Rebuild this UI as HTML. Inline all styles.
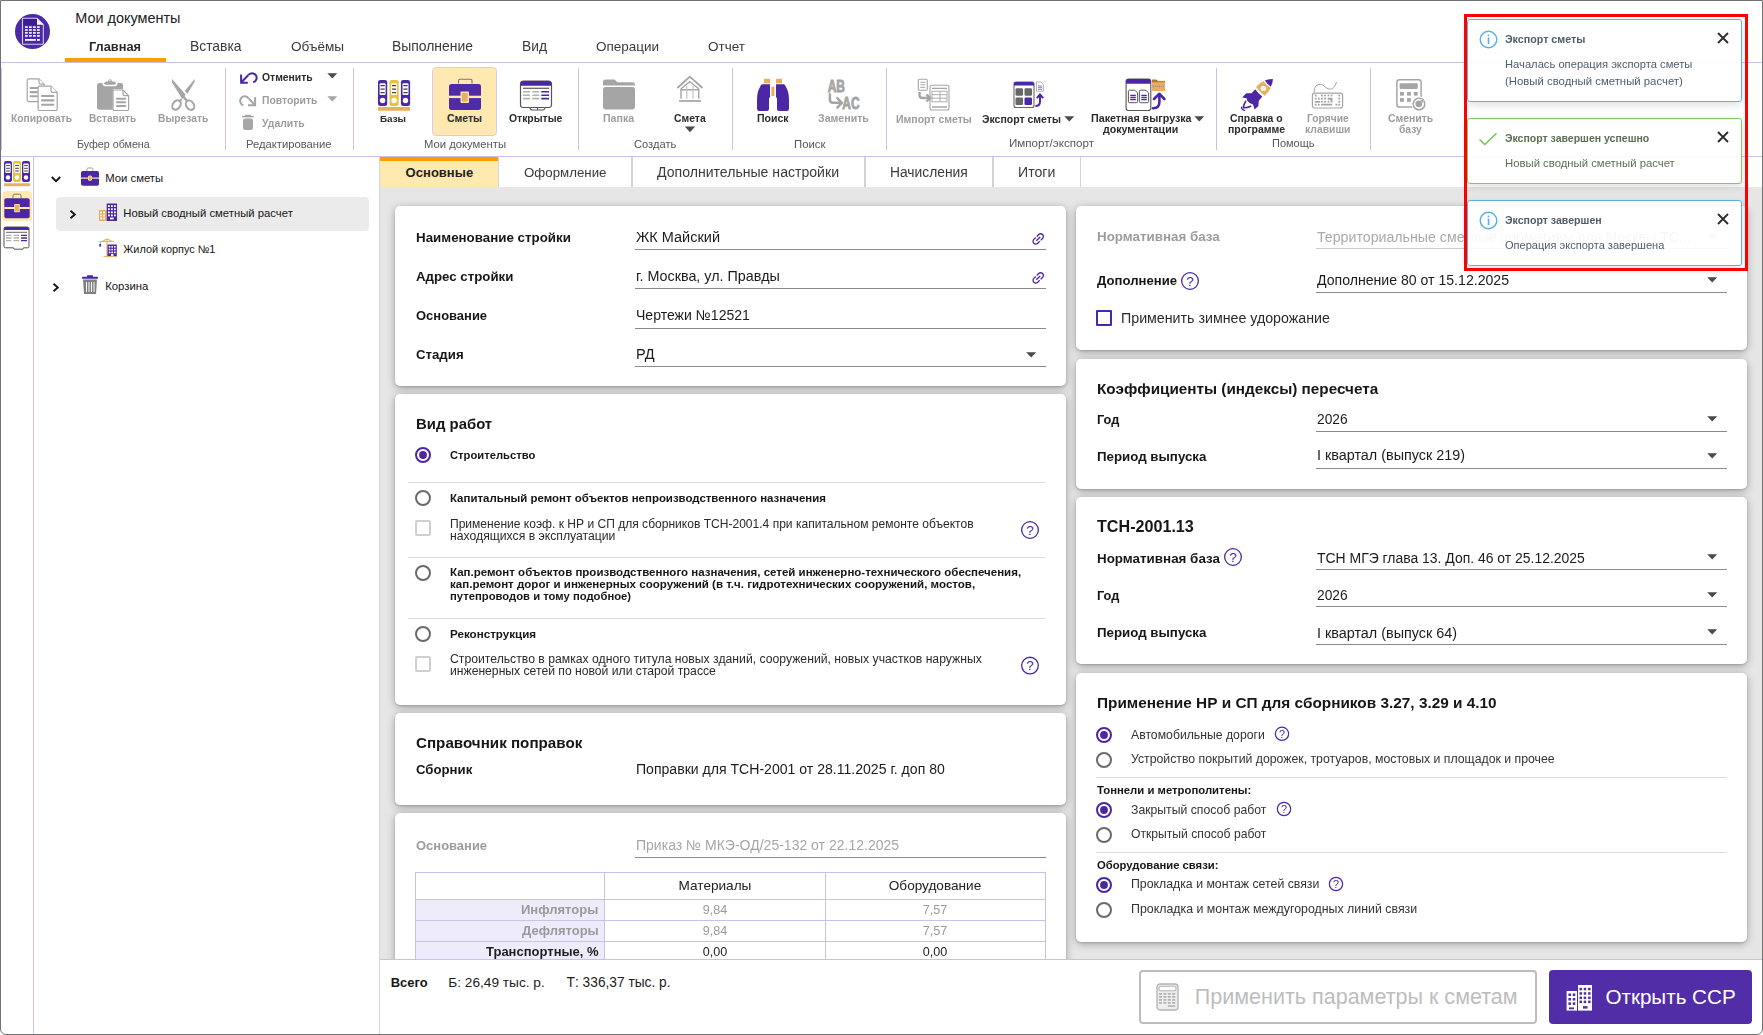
<!DOCTYPE html>
<html><head><meta charset="utf-8">
<style>
*{box-sizing:border-box;margin:0;padding:0}
html,body{width:1763px;height:1035px;overflow:hidden;background:#fff}
body{position:relative;font-family:"Liberation Sans",sans-serif;color:#1f1f1f}
.t{position:absolute;white-space:nowrap}
.r{position:absolute;display:block}
.card{position:absolute;background:#fff;border-radius:5px;box-shadow:0 2px 9px rgba(0,0,0,.3),0 1px 2px rgba(0,0,0,.15)}
.frame{position:absolute;left:0;top:0;width:1763px;height:1035px;border:1px solid #737373;border-radius:0 0 6px 6px;pointer-events:none;z-index:60}
</style></head><body>
<svg class="r" style="left:15px;top:14px;" width="36" height="36" viewBox="0 0 36 36"><circle cx="17.5" cy="17.5" r="17.5" fill="#4a2aa6"/>
<path d="M7.5 5 Q7.5 4.3 8.2 4.3 H22 L28.3 10.6 V29.5 Q28.3 30.2 27.6 30.2 H8.2 Q7.5 30.2 7.5 29.5 Z" fill="#4727a4" stroke="#d6ccf6" stroke-width="1.1"/>
<rect x="8.3" y="5.1" width="13.6" height="5.6" fill="#3a1b93"/>
<path d="M22 4.5 V10.8 H28.3 Z" fill="#fff"/>
<g fill="#fff">
<rect x="10" y="12.3" width="2.8" height="1.6"/><rect x="14" y="12.3" width="2.8" height="1.6"/><rect x="18" y="12.3" width="2.8" height="1.6"/><rect x="22" y="12.3" width="2.8" height="1.6"/>
<rect x="10" y="15.2" width="2.8" height="1.6"/><rect x="14" y="15.2" width="2.8" height="1.6"/><rect x="18" y="15.2" width="2.8" height="1.6"/><rect x="22" y="15.2" width="2.8" height="1.6"/>
<rect x="10" y="18.1" width="2.8" height="1.6"/><rect x="14" y="18.1" width="2.8" height="1.6"/><rect x="18" y="18.1" width="2.8" height="1.6"/><rect x="22" y="18.1" width="2.8" height="1.6"/>
<rect x="10" y="21.1" width="2.8" height="1.6"/><rect x="14" y="21.1" width="2.8" height="1.6"/><rect x="18" y="21.1" width="2.8" height="1.6"/><rect x="22" y="21.1" width="2.8" height="1.6"/>
<rect x="10" y="25" width="10.8" height="1.8"/><rect x="22" y="25" width="2.8" height="1.8"/>
</g></svg>
<div class="t" style="left:75.30px;top:11.00px;font-size:14.44px;line-height:14.44px;font-weight:400;color:#202020;">Мои документы</div>
<div class="t" style="left:89.30px;top:41.00px;font-size:12.79px;line-height:12.79px;font-weight:700;color:#2a2a2a;will-change:transform;">Главная</div>
<div class="t" style="left:190.20px;top:40.00px;font-size:13.86px;line-height:13.86px;font-weight:400;color:#3a3a3a;will-change:transform;">Вставка</div>
<div class="t" style="left:290.60px;top:40.00px;font-size:13.62px;line-height:13.62px;font-weight:400;color:#3a3a3a;will-change:transform;">Объёмы</div>
<div class="t" style="left:392.00px;top:40.00px;font-size:13.92px;line-height:13.92px;font-weight:400;color:#3a3a3a;will-change:transform;">Выполнение</div>
<div class="t" style="left:522.00px;top:40.00px;font-size:13.82px;line-height:13.82px;font-weight:400;color:#3a3a3a;will-change:transform;">Вид</div>
<div class="t" style="left:596.00px;top:40.00px;font-size:13.47px;line-height:13.47px;font-weight:400;color:#3a3a3a;will-change:transform;">Операции</div>
<div class="t" style="left:708.00px;top:40.00px;font-size:13.51px;line-height:13.51px;font-weight:400;color:#3a3a3a;will-change:transform;">Отчет</div>
<div class="r" style="left:65px;top:58px;width:101px;height:4px;background:#ff9d00;"></div>
<div class="r" style="left:0px;top:62px;width:1763px;height:1px;background:#cdbfea;"></div>
<div class="r" style="left:1px;top:68px;width:1px;height:82px;background:#cdbfea;"></div>
<div class="r" style="left:225px;top:68px;width:1px;height:82px;background:#cdbfea;"></div>
<div class="r" style="left:353px;top:68px;width:1px;height:82px;background:#cdbfea;"></div>
<div class="r" style="left:578px;top:68px;width:1px;height:82px;background:#cdbfea;"></div>
<div class="r" style="left:732px;top:68px;width:1px;height:82px;background:#cdbfea;"></div>
<div class="r" style="left:886px;top:68px;width:1px;height:82px;background:#cdbfea;"></div>
<div class="r" style="left:1216px;top:68px;width:1px;height:82px;background:#cdbfea;"></div>
<div class="r" style="left:1370px;top:68px;width:1px;height:82px;background:#cdbfea;"></div>
<svg class="r" style="left:26px;top:78px;" width="34" height="34" viewBox="0 0 34 34"><g fill="#fff" stroke="#a5a5a5" stroke-width="1.2" stroke-linejoin="round">
<path d="M2.8 0.9 H13 L18.1 6.2 V22.1 Q18.1 23.7 16.5 23.7 H2.8 Q1.2 23.7 1.2 22.1 V2.5 Q1.2 0.9 2.8 0.9Z"/><path d="M13 0.9 V4.6 Q13 6.2 14.6 6.2 H18.1"/>
<path d="M13.7 8.1 H25 L31.2 14.4 V30.9 Q31.2 32.5 29.6 32.5 H13.7 Q12.1 32.5 12.1 30.9 V9.7 Q12.1 8.1 13.7 8.1Z"/><path d="M25 8.1 V12.8 Q25 14.4 26.6 14.4 H31.2"/></g>
<g stroke="#a5a5a5" stroke-width="2.1" stroke-linecap="round"><path d="M4.6 10H11M4.6 14.1H11M4.6 18.2H11"/><path d="M16 18H27.4M16 22.4H27.4M16 26.7H27.4"/></g></svg>
<svg class="r" style="left:96px;top:78px;" width="34" height="34" viewBox="0 0 34 34"><rect x="1" y="5.1" width="26.1" height="26.6" rx="2.4" fill="#a5a5a5"/>
<path d="M7 5 Q7.5 7.5 10 7.5 H18 Q20.5 7.5 21 5" fill="none" stroke="#fff" stroke-width="1.6"/>
<path d="M8.3 5.8 Q8.3 3.4 10.5 3.4 H12 Q12.2 1.2 14 1.2 Q15.8 1.2 16 3.4 H17.6 Q19.8 3.4 19.8 5.8 Z" fill="#a5a5a5"/><circle cx="14" cy="2.8" r=".7" fill="#fff"/>
<path d="M18.7 11 H27.5 L33.3 16.8 V31 Q33.3 33 31.3 33 H18.7 Q16.7 33 16.7 31 V13 Q16.7 11 18.7 11Z" fill="#fff"/>
<path d="M18.6 12 H27 L32.6 17.6 V30.9 Q32.6 32.5 31 32.5 H18.6 Q17 32.5 17 30.9 V13.6 Q17 12 18.6 12Z" fill="#fff" stroke="#a5a5a5" stroke-width="1.2" stroke-linejoin="round"/><path d="M27 12 V16 Q27 17.6 28.6 17.6 H32.6" fill="none" stroke="#a5a5a5" stroke-width="1.2"/>
<g stroke="#a5a5a5" stroke-width="2" stroke-linecap="round"><path d="M21 20.8H29.2M21 24.2H29.2M21 28H29.2"/></g></svg>
<svg class="r" style="left:165px;top:74px;" width="40" height="40" viewBox="0 0 40 40"><g fill="#a5a5a5"><path d="M7 5 L20.4 20.2 L19.6 23 L17.2 25 L7 8.6 Z"/><path d="M29.8 5 L29.8 7.6 L22.3 20 L19.9 16.8 Z"/></g>
<path d="M18.3 22.6 L22.3 27.3" stroke="#a5a5a5" stroke-width="2.4"/><path d="M16.6 25.3 L14.6 27.2" stroke="#a5a5a5" stroke-width="2.2"/>
<g fill="none" stroke="#a5a5a5" stroke-width="2"><ellipse cx="11.5" cy="31" rx="3.7" ry="5.1" transform="rotate(35 11.5 31)"/><ellipse cx="25" cy="31.2" rx="3.7" ry="5.1" transform="rotate(-35 25 31.2)"/></g></svg>
<div class="t" style="left:10.90px;top:114.00px;font-size:10.31px;line-height:10.31px;font-weight:700;color:#9d9d9d;will-change:transform;">Копировать</div>
<div class="t" style="left:88.80px;top:114.00px;font-size:10.15px;line-height:10.15px;font-weight:700;color:#9d9d9d;will-change:transform;">Вставить</div>
<div class="t" style="left:158.20px;top:114.00px;font-size:10.31px;line-height:10.31px;font-weight:700;color:#9d9d9d;will-change:transform;">Вырезать</div>
<div class="t" style="left:76.50px;top:139.00px;font-size:10.71px;line-height:10.71px;font-weight:400;color:#575757;will-change:transform;">Буфер обмена</div>
<svg class="r" style="left:239px;top:71px;" width="19" height="14" viewBox="0 0 19 14"><g fill="none" stroke="#4b27a6" stroke-width="2"><path d="M2.1 3.4 V11.7 H8.8"/><path d="M2.6 11 L9.2 4.3"/><path d="M9.2 4.3 A4.6 4.6 0 1 1 14.2 11.3"/></g></svg>
<svg class="r" style="left:239px;top:94px;" width="19" height="14" viewBox="0 0 19 14"><g fill="none" stroke="#a5a5a5" stroke-width="2"><path d="M16.1 3.3 V11.3 H9"/><path d="M15.6 10.8 L9.6 4.4"/><path d="M9.6 4.4 A4.6 4.6 0 1 0 4.3 11.3"/></g></svg>
<svg class="r" style="left:240px;top:114px;" width="16" height="17" viewBox="0 0 16 17"><rect x="3" y="4.4" width="10" height="11.6" rx="2" fill="#a5a5a5"/><rect x="2" y="1.8" width="11.8" height="1.6" fill="#a5a5a5"/><path d="M4.6 1.9 Q4.6 0.8 6 0.8 H9.8 Q11.2 0.8 11.2 1.9Z" fill="#a5a5a5"/></svg>
<div class="t" style="left:262.30px;top:73.00px;font-size:10.38px;line-height:10.38px;font-weight:700;color:#2b2b2b;will-change:transform;">Отменить</div>
<div class="t" style="left:262.30px;top:96.00px;font-size:10.36px;line-height:10.36px;font-weight:700;color:#9d9d9d;will-change:transform;">Повторить</div>
<div class="t" style="left:262.30px;top:119.00px;font-size:10.4px;line-height:10.4px;font-weight:700;color:#9d9d9d;will-change:transform;">Удалить</div>
<svg class="r" style="left:327px;top:73px;" width="11" height="6" viewBox="0 0 11 6"><path d="M0.3 0.3 H10.3 L5.3 5.6 Z" fill="#4a4a4a"/></svg>
<svg class="r" style="left:327px;top:96px;" width="11" height="6" viewBox="0 0 11 6"><path d="M0.3 0.3 H10.3 L5.3 5.6 Z" fill="#a5a5a5"/></svg>
<div class="t" style="left:246.40px;top:139.00px;font-size:11.24px;line-height:11.24px;font-weight:400;color:#575757;will-change:transform;">Редактирование</div>
<svg class="r" style="left:377px;top:80px;" width="34" height="31" viewBox="0 0 34 31"><rect x="1.0" y="0" width="9.2" height="26" rx="2.3" fill="#4b27a6"/><rect x="2.6" y="3.3" width="6" height="11.6" rx="1" fill="#fff"/><path d="M3.5 5.6H7.7M3.5 9.1H7.7M3.5 12.6H7.7" stroke="#444" stroke-width="1.2"/><circle cx="5.6" cy="20.5" r="2.7" fill="#fff"/><rect x="12.5" y="0" width="9.2" height="26" rx="2.3" fill="#e9c237"/><rect x="14.1" y="3.3" width="6" height="11.6" rx="1" fill="#fff"/><path d="M15.0 5.6H19.2M15.0 9.1H19.2M15.0 12.6H19.2" stroke="#444" stroke-width="1.2"/><circle cx="17.1" cy="20.5" r="2.7" fill="#fff"/><rect x="23.9" y="0" width="9.2" height="26" rx="2.3" fill="#4b27a6"/><rect x="25.5" y="3.3" width="6" height="11.6" rx="1" fill="#fff"/><path d="M26.4 5.6H30.6M26.4 9.1H30.6M26.4 12.6H30.6" stroke="#444" stroke-width="1.2"/><circle cx="28.5" cy="20.5" r="2.7" fill="#fff"/><rect x="1" y="27" width="32" height="3.8" rx="1" fill="#e8b05c"/></svg>
<div class="t" style="left:380.40px;top:114.00px;font-size:9.85px;line-height:9.85px;font-weight:700;color:#2b2b2b;will-change:transform;">Базы</div>
<div class="r" style="left:432px;top:67px;width:65px;height:69px;background:#ffe9b1;border:1px solid #d9c9f0;border-radius:4px;"></div>
<svg class="r" style="left:448px;top:78px;" width="35" height="33" viewBox="0 0 35 33"><path d="M10.5 5.6 V2.6 Q10.5 1.2 12 1.2 H22.5 Q24 1.2 24 2.6 V5.6" fill="none" stroke="#777" stroke-width="1.1"/>
<rect x="1" y="6" width="32" height="26" rx="2.5" fill="#4f2ba6"/><rect x="1" y="17.7" width="32" height="2.4" fill="#ffe9b1"/>
<rect x="12.5" y="13.5" width="8.5" height="11.5" rx="1" fill="#ffe9b1"/><rect x="13.8" y="14.8" width="5.9" height="8.9" fill="#e8b05c"/></svg>
<div class="t" style="left:447.00px;top:114.00px;font-size:10.45px;line-height:10.45px;font-weight:700;color:#2b2b2b;">Сметы</div>
<svg class="r" style="left:519px;top:80px;" width="35" height="32" viewBox="0 0 35 32"><path d="M1.5 4 Q1.5 1 4.5 1 H29.5 Q32.5 1 32.5 4 V25 Q32.5 27 30.5 27.5 H26 L25.5 29 Q25 30 23.5 30 H13.5 Q12 30 11.5 29 L11 27.5 H4 Q1.5 27.5 1.5 25 Z" fill="#fff" stroke="#555" stroke-width="1.2"/>
<path d="M1.5 4.5 Q1.5 1 4.5 1 H29.5 Q32.5 1 32.5 4.5 V5.8 H1.5 Z" fill="#4b27a6"/>
<path d="M4 8.3H30.2" stroke="#666" stroke-width="1.3"/>
<g stroke="#b3b3b3" stroke-width="1.6"><path d="M4 11.7H11M13.3 11.7H20.3M4 15.2H11M13.3 15.2H20.3M4 18.6H11M13.3 18.6H20.3"/></g>
<g stroke="#4b27a6" stroke-width="1.6"><path d="M22.3 11.7H30M22.3 15.2H30M22.3 18.6H30"/></g>
<path d="M11.5 27.5 H25.5 M18.5 27.5 V30" stroke="#555" stroke-width="1"/></svg>
<div class="t" style="left:508.80px;top:114.00px;font-size:10.4px;line-height:10.4px;font-weight:700;color:#2b2b2b;will-change:transform;">Открытые</div>
<div class="t" style="left:424.20px;top:139.00px;font-size:11.27px;line-height:11.27px;font-weight:400;color:#575757;will-change:transform;">Мои документы</div>
<svg class="r" style="left:602px;top:79px;" width="34" height="31" viewBox="0 0 34 31"><path d="M1 3 Q1 0.5 3.5 0.5 H12.5 L15.5 3.3 H30.5 Q33 3.3 33 5.8 V6.6 H1 Z" fill="#a5a5a5"/>
<rect x="1" y="8.1" width="32" height="22.3" rx="2.4" fill="#a5a5a5"/></svg>
<svg class="r" style="left:676px;top:75px;" width="28" height="28" viewBox="0 0 28 28"><g fill="none" stroke="#a5a5a5" stroke-linejoin="miter"><path d="M1.3 13 L13.8 1.6 L26.5 13" stroke-width="1.8"/><path d="M5 13.7 L13.8 6.6 L22.7 13.7" stroke-width="1.4"/>
<path d="M5 13.5 V23.8 M22.7 13.5 V23.8 M5 14.8 H22.7" stroke-width="1.4"/><path d="M10.8 11 V23.8 M17 11 V23.8" stroke="#c4c4c4" stroke-width="1.2"/></g>
<path d="M3 26 H25.1" stroke="#a5a5a5" stroke-width="1.7"/></svg>
<div class="t" style="left:602.90px;top:113.00px;font-size:10.59px;line-height:10.59px;font-weight:700;color:#9d9d9d;will-change:transform;">Папка</div>
<div class="t" style="left:673.50px;top:114.00px;font-size:10.39px;line-height:10.39px;font-weight:700;color:#2b2b2b;will-change:transform;">Смета</div>
<svg class="r" style="left:684px;top:126px;" width="12" height="7" viewBox="0 0 12 7"><path d="M0.8 0.6 H11.2 L6 6.2 Z" fill="#4a4a4a"/></svg>
<div class="t" style="left:633.70px;top:139.00px;font-size:11.13px;line-height:11.13px;font-weight:400;color:#575757;will-change:transform;">Создать</div>
<svg class="r" style="left:756px;top:78px;" width="35" height="34" viewBox="0 0 35 34"><rect x="8" y="0.8" width="6" height="4.6" fill="#e8b05c"/><rect x="20" y="0.8" width="6" height="4.6" fill="#e8b05c"/>
<rect x="15.4" y="8.6" width="3" height="9.4" fill="#e8b05c"/>
<path d="M6 6.2 H14 V19 L13 20.5 V31 Q13 33 11 33 H3 Q1 33 1 30 V22 Q1 14 4 9 Q5 6.2 6 6.2Z" fill="#4b27a6"/>
<path d="M28 6.2 H20 V19 L21 20.5 V31 Q21 33 23 33 H31 Q33 33 33 30 V22 Q33 14 30 9 Q29 6.2 28 6.2Z" fill="#4b27a6"/></svg>
<svg class="r" style="left:820px;top:74px;" width="46" height="40" viewBox="0 0 46 40"><g transform="scale(0.74,1)" fill="#a5a5a5" stroke="#a5a5a5" stroke-width="0.9" font-family="Liberation Sans" font-weight="700" font-size="16.2"><text x="10.4" y="18">AB</text><text x="30.2" y="35">AC</text></g>
<g fill="none" stroke="#a5a5a5" stroke-width="2.5" stroke-linecap="round" stroke-linejoin="round"><path d="M9.9 20.3 V25.5 Q9.9 28.8 13.2 28.8 H21.5"/><path d="M17.3 24.2 L21.8 28.8 L17.3 33.6"/></g></svg>
<div class="t" style="left:756.70px;top:113.00px;font-size:10.53px;line-height:10.53px;font-weight:700;color:#2b2b2b;will-change:transform;">Поиск</div>
<div class="t" style="left:818.10px;top:113.00px;font-size:10.6px;line-height:10.6px;font-weight:700;color:#9d9d9d;will-change:transform;">Заменить</div>
<div class="t" style="left:793.50px;top:139.00px;font-size:11.37px;line-height:11.37px;font-weight:400;color:#575757;will-change:transform;">Поиск</div>
<svg class="r" style="left:917px;top:78px;" width="34" height="34" viewBox="0 0 34 34"><rect x="1.3" y="1.3" width="9" height="11" rx="1.2" fill="#fff" stroke="#a5a5a5" stroke-width="1.1"/>
<path d="M3.3 4.3H8.3M3.3 6.8H8.3M3.3 9.4H8.3" stroke="#a5a5a5" stroke-width="1"/>
<rect x="13" y="7.2" width="19" height="24.8" rx="2" fill="#fff" stroke="#a5a5a5" stroke-width="1.1"/>
<path d="M15 10.3H30M15 29H30" stroke="#a5a5a5" stroke-width="1.3"/>
<rect x="15" y="13.2" width="15" height="10.6" fill="none" stroke="#a5a5a5" stroke-width="0.9"/><path d="M15 16.7H30M15 20.2H30M23 13.2V23.8" stroke="#a5a5a5" stroke-width="0.9"/>
<path d="M2.5 14 V17 Q2.5 20 5.5 20 H13" fill="none" stroke="#a5a5a5" stroke-width="2.4"/><path d="M9.5 16.6 L13.2 20 L9.5 23.5" fill="none" stroke="#a5a5a5" stroke-width="2.4"/></svg>
<svg class="r" style="left:1013px;top:81px;" width="34" height="28" viewBox="0 0 34 28"><rect x="1" y="1" width="20" height="25.5" rx="2" fill="#fff" stroke="#666" stroke-width="1.1"/>
<path d="M1 3 Q1 1 3 1 H19 Q21 1 21 3 V4.5 H1 Z" fill="#4b27a6"/>
<rect x="2.5" y="7.2" width="7.5" height="7.6" rx="1.3" fill="#666"/><rect x="11.5" y="7.2" width="7.5" height="7.6" rx="1.3" fill="#666"/>
<rect x="2.5" y="16.5" width="7.5" height="7.6" rx="1.3" fill="#666"/><rect x="11.5" y="16.5" width="7.5" height="7.6" rx="1.3" fill="#4b27a6"/>
<path d="M23.5 1 H28 L30.3 3.3 V10.3 H23.5 Z" fill="#fff" stroke="#aaa" stroke-width="0.9"/><path d="M25 5H29M25 6.7H29M25 8.4H29" stroke="#7a6ab8" stroke-width="0.9"/>
<path d="M22.4 25 Q27 25 27 20.5 V14.5" fill="none" stroke="#4b27a6" stroke-width="2"/><path d="M23.8 17.2 L27 13.5 L30.2 17.2" fill="none" stroke="#4b27a6" stroke-width="2"/></svg>
<div class="t" style="left:895.90px;top:114.00px;font-size:10.51px;line-height:10.51px;font-weight:700;color:#9d9d9d;will-change:transform;">Импорт сметы</div>
<div class="t" style="left:981.50px;top:114.00px;font-size:10.5px;line-height:10.5px;font-weight:700;color:#2b2b2b;will-change:transform;">Экспорт сметы</div>
<svg class="r" style="left:1064px;top:116px;" width="11" height="6" viewBox="0 0 11 6"><path d="M0.3 0.2 H10.3 L5.3 5.5 Z" fill="#4a4a4a"/></svg>
<div class="t" style="left:1008.70px;top:137.00px;font-size:11.61px;line-height:11.61px;font-weight:400;color:#575757;will-change:transform;">Импорт/экспорт</div>
<svg class="r" style="left:1125px;top:78px;" width="42" height="34" viewBox="0 0 42 34"><rect x="1.1" y="1" width="24.7" height="31.5" rx="2.6" fill="#fff" stroke="#555" stroke-width="1.1"/>
<path d="M1.1 3.5 Q1.1 1 3.6 1 H23.3 Q25.8 1 25.8 3.5 V5.7 H1.1 Z" fill="#4b27a6"/>
<path d="M3.4 13.3 Q3.4 12.2 4.6 12.2 H9.8 L12.6 15 V23.6 Q12.6 24.7 11.4 24.7 H4.6 Q3.4 24.7 3.4 23.6Z" fill="#fff" stroke="#555" stroke-width="1"/>
<path d="M14.4 13.3 Q14.4 12.2 15.6 12.2 H20.8 L23.6 15 V23.6 Q23.6 24.7 22.4 24.7 H15.6 Q14.4 24.7 14.4 23.6Z" fill="#fff" stroke="#555" stroke-width="1"/>
<path d="M5.3 17.4H10.8M5.3 19.5H10.8M5.3 21.7H10.8M16.3 17.4H21.8M16.3 19.5H21.8M16.3 21.7H21.8" stroke="#4b27a6" stroke-width="1.3"/>
<path d="M27 1.5 H31.5 L33 2.8 H40 V13 H27 Z" fill="#e8b05c"/><path d="M27 1.8 H31.5 L33 3.2 H40 V4.2 H27Z" fill="#a87a2a"/>
<path d="M27.5 8.4 H39.5" stroke="#8a8a9a" stroke-width="1.1" stroke-dasharray="1.1 1"/>
<g fill="none" stroke="#4b27a6" stroke-width="2.6" stroke-linecap="round" stroke-linejoin="round"><path d="M28 30.2 Q34.4 30.5 34.4 24 V16.5"/><path d="M29 21 L34.4 15.8 L39.4 21"/></g></svg>
<div class="t" style="left:1090.70px;top:113.00px;font-size:10.69px;line-height:10.69px;font-weight:700;color:#2b2b2b;will-change:transform;">Пакетная выгрузка</div>
<div class="t" style="left:1103.20px;top:124.00px;font-size:10.64px;line-height:10.64px;font-weight:700;color:#2b2b2b;will-change:transform;">документации</div>
<svg class="r" style="left:1194px;top:116px;" width="11" height="6" viewBox="0 0 11 6"><path d="M0.3 0.2 H10.3 L5.3 5.5 Z" fill="#4a4a4a"/></svg>
<svg class="r" style="left:1240px;top:78px;" width="35" height="34" viewBox="0 0 35 34"><path d="M24.8 2.6 Q28 1.2 32.8 0.9 Q33.2 4 30.8 8.8 Q27.5 6.5 24.8 2.6Z" fill="#4b27a6"/>
<path d="M16.1 9.1 Q19 5.5 23.5 3 Q26.5 7.5 30.8 9.9 Q28.5 14.5 24.6 17.7 Q19.5 14.5 16.1 9.1Z" fill="#e8b05c"/><circle cx="23.4" cy="10.4" r="2.7" fill="#fff"/>
<path d="M15.3 11.3 Q18 15.8 22.3 18.4 L18.8 22.8 L18.4 28.1 L14.6 31.6 L13 26.4 Q10 26 7.2 22.7 L6.8 20.4 L2.2 19.2 L6.4 15.3 L11.5 15.3 Z" fill="#4b27a6"/>
<path d="M5.6 23.3 Q3.5 27 3.4 29.6 Q6.5 30.2 10.6 28.3" fill="none" stroke="#4b27a6" stroke-width="1.7" stroke-linecap="round"/><path d="M1.5 29.2 Q1.6 31.8 4.6 32.3" fill="none" stroke="#4b27a6" stroke-width="1.2" stroke-linecap="round"/></svg>
<svg class="r" style="left:1311px;top:81px;" width="33" height="29" viewBox="0 0 33 29"><path d="M3 11.8 Q3 6.5 5 4.8 Q7 3 9.5 3.3 Q12 3.6 14.5 6.3 Q17 8.4 19.5 8.2 Q23 8 25.6 1" fill="none" stroke="#a5a5a5" stroke-width="1"/>
<rect x="1.4" y="12.2" width="30.2" height="14.8" rx="2.2" fill="#fff" stroke="#a5a5a5" stroke-width="1.2"/>
<g fill="#a5a5a5"><rect x="3.8" y="13.6" width="1.8" height="1.8"/><rect x="10.0" y="13.6" width="1.8" height="1.8"/><rect x="13.1" y="13.6" width="1.8" height="1.8"/><rect x="16.6" y="13.6" width="1.8" height="1.8"/><rect x="19.8" y="13.6" width="1.8" height="1.8"/><rect x="27.4" y="13.6" width="1.8" height="1.8"/><rect x="3.8" y="16.7" width="1.8" height="1.8"/><rect x="6.9" y="16.7" width="1.8" height="1.8"/><rect x="10.0" y="16.7" width="1.8" height="1.8"/><rect x="13.1" y="16.7" width="1.8" height="1.8"/><rect x="27.4" y="16.7" width="1.8" height="1.8"/><path d="M16.6 16.7 H21.6 V21.6 H19.6 V18.7 H16.6Z"/><rect x="3.8" y="19.9" width="5.4" height="1.8" rx=".6"/><rect x="10.0" y="19.8" width="1.8" height="1.8"/><rect x="13.1" y="19.8" width="1.8" height="1.8"/><rect x="16.6" y="19.8" width="1.8" height="1.8"/><rect x="27.4" y="19.8" width="1.8" height="1.8"/><rect x="3.8" y="22.8" width="1.8" height="1.8"/><rect x="6.9" y="22.8" width="1.8" height="1.8"/><rect x="10" y="22.8" width="11.2" height="1.8" rx=".6"/><rect x="24.5" y="22.8" width="1.8" height="1.8"/><rect x="27.4" y="22.8" width="1.8" height="1.8"/></g></svg>
<div class="t" style="left:1230.30px;top:114.00px;font-size:10.43px;line-height:10.43px;font-weight:700;color:#2b2b2b;will-change:transform;">Справка о</div>
<div class="t" style="left:1228.00px;top:124.00px;font-size:10.51px;line-height:10.51px;font-weight:700;color:#2b2b2b;will-change:transform;">программе</div>
<div class="t" style="left:1306.50px;top:114.00px;font-size:10.29px;line-height:10.29px;font-weight:700;color:#9d9d9d;will-change:transform;">Горячие</div>
<div class="t" style="left:1304.50px;top:125.00px;font-size:10.38px;line-height:10.38px;font-weight:700;color:#9d9d9d;will-change:transform;">клавиши</div>
<div class="t" style="left:1271.80px;top:138.00px;font-size:11.0px;line-height:11.0px;font-weight:400;color:#575757;will-change:transform;">Помощь</div>
<svg class="r" style="left:1395px;top:78px;" width="33" height="34" viewBox="0 0 33 34"><rect x="1.9" y="1.7" width="24.2" height="27.4" rx="2.6" fill="#fff" stroke="#a5a5a5" stroke-width="1.5"/>
<rect x="4.6" y="5.3" width="18.2" height="5.6" rx="1" fill="#a5a5a5"/>
<g fill="#a5a5a5"><rect x="5" y="14" width="3.9" height="3.6"/><rect x="12" y="14" width="3.9" height="3.6"/><rect x="18.8" y="14" width="3.9" height="3.6"/><rect x="5" y="20.1" width="3.9" height="3.7"/><rect x="12" y="20.1" width="3.9" height="3.7"/></g>
<circle cx="24" cy="26" r="7.6" fill="#fff"/><circle cx="24" cy="26" r="5.8" fill="none" stroke="#a5a5a5" stroke-width="1.5"/><circle cx="23.8" cy="25.8" r="3.4" fill="#a5a5a5"/>
<path d="M26 21.5 L29.8 22.2 L27.2 25.2 Z" fill="#fff"/><path d="M25.2 22.4 L28.8 21.3 L28.2 24.9 Z" fill="#a5a5a5"/></svg>
<div class="t" style="left:1387.80px;top:114.00px;font-size:10.43px;line-height:10.43px;font-weight:700;color:#9d9d9d;will-change:transform;">Сменить</div>
<div class="t" style="left:1399.00px;top:125.00px;font-size:10.3px;line-height:10.3px;font-weight:700;color:#9d9d9d;will-change:transform;">базу</div>
<div class="r" style="left:0px;top:156px;width:1763px;height:1px;background:#cdbfea;"></div>
<div class="r" style="left:33px;top:157px;width:1px;height:878px;background:#cdbfea;"></div>
<svg class="r" style="left:4px;top:161px;" width="26" height="26" viewBox="0 0 26 26"><rect x="0" y="0" width="8" height="21" rx="2" fill="#4b27a6"/><rect x="1.3" y="2.6" width="5.4" height="9.4" rx=".8" fill="#fff"/><path d="M2.1 4.6H5.9M2.1 7.3H5.9M2.1 10H5.9" stroke="#444" stroke-width="1"/><circle cx="4" cy="16.5" r="2.2" fill="#fff"/><rect x="9" y="0" width="8" height="21" rx="2" fill="#e9c237"/><rect x="10.3" y="2.6" width="5.4" height="9.4" rx=".8" fill="#fff"/><path d="M11.1 4.6H14.9M11.1 7.3H14.9M11.1 10H14.9" stroke="#444" stroke-width="1"/><circle cx="13" cy="16.5" r="2.2" fill="#fff"/><rect x="18" y="0" width="8" height="21" rx="2" fill="#4b27a6"/><rect x="19.3" y="2.6" width="5.4" height="9.4" rx=".8" fill="#fff"/><path d="M20.1 4.6H23.9M20.1 7.3H23.9M20.1 10H23.9" stroke="#444" stroke-width="1"/><circle cx="22" cy="16.5" r="2.2" fill="#fff"/><rect x="0" y="22.3" width="26" height="3" rx=".8" fill="#e8b05c"/></svg>
<div class="r" style="left:2px;top:191px;width:30px;height:30px;background:#ffe9b1;border-radius:4px;"></div>
<svg class="r" style="left:4px;top:193px;" width="26" height="26" viewBox="0 0 26 26"><path d="M9 5 V2.5 Q9 1.2 10.3 1.2 H15.7 Q17 1.2 17 2.5 V5" fill="none" stroke="#777" stroke-width="1"/>
<rect x="0.3" y="5.3" width="25.4" height="20" rx="2" fill="#4b27a6"/><rect x="0.3" y="14" width="25.4" height="2" fill="#ffe9b1"/>
<rect x="10.2" y="11" width="5.6" height="8.3" rx=".8" fill="#ffe9b1"/><rect x="11" y="11.8" width="4" height="6.7" fill="#e8b05c"/></svg>
<svg class="r" style="left:3px;top:226px;" width="28" height="25" viewBox="0 0 28 25"><path d="M1 2.5 Q1 1 2.5 1 H24.5 Q26 1 26 2.5 V20.5 Q26 21.8 24.5 21.8 H20.5 L20 23.2 H11 L10.5 21.8 H2.5 Q1 21.8 1 20.5 Z" fill="#fff" stroke="#555" stroke-width="1"/>
<path d="M1 3 Q1 1 3 1 H24 Q26 1 26 3 V4 H1 Z" fill="#4b27a6"/>
<path d="M3 6.3H24" stroke="#666" stroke-width="1"/>
<g stroke="#b3b3b3" stroke-width="1.3"><path d="M3 9.3H8.5M10.5 9.3H16M3 12H8.5M10.5 12H16M3 14.7H8.5M10.5 14.7H16"/></g>
<g stroke="#4b27a6" stroke-width="1.3"><path d="M18 9.3H24M18 12H24M18 14.7H24"/></g></svg>
<div class="r" style="left:56px;top:197px;width:313px;height:34px;background:#ebebeb;border-radius:4px;"></div>
<svg class="r" style="left:50px;top:175px;" width="12" height="9" viewBox="0 0 12 9"><path d="M1.8 2 L6 6.2 L10.2 2" fill="none" stroke="#161616" stroke-width="1.9"/></svg>
<svg class="r" style="left:80px;top:167px;" width="20" height="19" viewBox="0 0 20 19"><path d="M7 4 V2.2 Q7 1 8.2 1 H11.8 Q13 1 13 2.2 V4" fill="none" stroke="#999" stroke-width=".9"/>
<rect x="1" y="4" width="18" height="14.8" rx="1.8" fill="#4b27a6"/><rect x="1" y="10.5" width="18" height="1.2" fill="#ffe9b1"/>
<rect x="8" y="8.5" width="4" height="5.2" rx="1.5" fill="#ffe9b1"/><rect x="8.7" y="9.2" width="2.6" height="3.8" rx="1" fill="#e8b05c"/></svg>
<div class="t" style="left:105.20px;top:173.00px;font-size:11.32px;line-height:11.32px;font-weight:400;color:#161616;">Мои сметы</div>
<svg class="r" style="left:68px;top:209px;" width="10" height="11" viewBox="0 0 10 11"><path d="M2.5 1.8 L6.8 5.5 L2.5 9.2" fill="none" stroke="#161616" stroke-width="1.9"/></svg>
<svg class="r" style="left:98px;top:203px;" width="20" height="19" viewBox="0 0 20 19"><rect x="1" y="7" width="7.5" height="11" fill="#e8b05c"/>
<g fill="#fff"><rect x="2.2" y="8.6" width="1.8" height="1.8"/><rect x="5.2" y="8.6" width="1.8" height="1.8"/><rect x="2.2" y="11.6" width="1.8" height="1.8"/><rect x="5.2" y="11.6" width="1.8" height="1.8"/><rect x="2.2" y="14.6" width="1.8" height="1.8"/><rect x="5.2" y="14.6" width="1.8" height="1.8"/></g>
<rect x="8.7" y="0.5" width="10.3" height="17.5" fill="#4b27a6"/>
<g fill="#fff"><rect x="10" y="2.2" width="1.8" height="1.8"/><rect x="13" y="2.2" width="1.8" height="1.8"/><rect x="16" y="2.2" width="1.8" height="1.8"/><rect x="10" y="5.3" width="1.8" height="1.8"/><rect x="13" y="5.3" width="1.8" height="1.8"/><rect x="16" y="5.3" width="1.8" height="1.8"/><rect x="10" y="8.4" width="1.8" height="1.8"/><rect x="13" y="8.4" width="1.8" height="1.8"/><rect x="16" y="8.4" width="1.8" height="1.8"/><rect x="10" y="11.5" width="1.8" height="1.8"/><rect x="13" y="11.5" width="1.8" height="1.8"/><rect x="16" y="11.5" width="1.8" height="1.8"/><rect x="12" y="14.6" width="3.6" height="1.8"/></g></svg>
<div class="t" style="left:123.30px;top:208.00px;font-size:11.32px;line-height:11.32px;font-weight:400;color:#161616;">Новый сводный сметный расчет</div>
<svg class="r" style="left:98px;top:238px;" width="20" height="20" viewBox="0 0 20 20"><path d="M1.5 3.5 H16 M9 0.5 V18 M4 3.5 L9 0.8 L14 3.5" fill="none" stroke="#e8b05c" stroke-width="1.1"/>
<path d="M2.2 3.5 V6" stroke="#888" stroke-width=".7"/><rect x="1.3" y="6" width="1.8" height="2.6" fill="#4b27a6"/>
<rect x="9.5" y="6.5" width="9.3" height="12" fill="#4b27a6"/>
<g fill="#fff"><rect x="10.8" y="8" width="1.6" height="1.6"/><rect x="13.4" y="8" width="1.6" height="1.6"/><rect x="16" y="8" width="1.6" height="1.6"/><rect x="10.8" y="10.8" width="1.6" height="1.6"/><rect x="13.4" y="10.8" width="1.6" height="1.6"/><rect x="16" y="10.8" width="1.6" height="1.6"/><rect x="10.8" y="13.6" width="1.6" height="1.6"/><rect x="13.4" y="13.6" width="1.6" height="1.6"/><rect x="16" y="13.6" width="1.6" height="1.6"/><rect x="13" y="16" width="2.4" height="2.5"/></g>
<path d="M5.5 18.6 H19" stroke="#e8b05c" stroke-width="1"/></svg>
<div class="t" style="left:123.30px;top:244.00px;font-size:10.89px;line-height:10.89px;font-weight:400;color:#161616;">Жилой корпус №1</div>
<svg class="r" style="left:51px;top:282px;" width="10" height="11" viewBox="0 0 10 11"><path d="M2.5 1.8 L6.8 5.5 L2.5 9.2" fill="none" stroke="#161616" stroke-width="1.9"/></svg>
<svg class="r" style="left:81px;top:275px;" width="18" height="20" viewBox="0 0 18 20"><rect x="6" y="0.3" width="6" height="1.8" rx=".5" fill="#4b27a6"/><rect x="1" y="1.8" width="16" height="2" rx=".5" fill="#4b27a6"/>
<path d="M2 4.5 H16 L15 19 H3 Z" fill="#808080"/><path d="M5.5 7V17M8 7V17M10.5 7V17M13 7V17" stroke="#fff" stroke-width="1"/></svg>
<div class="t" style="left:105.20px;top:281.00px;font-size:11.34px;line-height:11.34px;font-weight:400;color:#161616;">Корзина</div>
<div class="r" style="left:379px;top:157px;width:1px;height:878px;background:#d6d4dc"></div>
<div class="r" style="left:380px;top:187px;width:1382px;height:772px;background:#e6e6e6"></div>
<div class="r" style="left:380px;top:157px;width:1382px;height:30px;background:#fff"></div>
<div class="r" style="left:380px;top:157px;width:118px;height:30px;background:#ffe9b1;"></div>
<div class="r" style="left:380px;top:157px;width:118px;height:4px;background:#ff9d00;"></div>
<div class="r" style="left:498px;top:157px;width:1px;height:30px;background:#d3d3d3;"></div>
<div class="r" style="left:631px;top:157px;width:2px;height:30px;background:#d3d3d3;"></div>
<div class="r" style="left:864px;top:157px;width:2px;height:30px;background:#d3d3d3;"></div>
<div class="r" style="left:992px;top:157px;width:2px;height:30px;background:#d3d3d3;"></div>
<div class="r" style="left:1080px;top:157px;width:1px;height:30px;background:#d3d3d3;"></div>
<div class="t" style="left:405.60px;top:166.00px;font-size:13.06px;line-height:13.06px;font-weight:700;color:#1f1f1f;">Основные</div>
<div class="t" style="left:523.70px;top:166.00px;font-size:13.29px;line-height:13.29px;font-weight:400;color:#3a3a3a;will-change:transform;">Оформление</div>
<div class="t" style="left:657.00px;top:165.00px;font-size:14.09px;line-height:14.09px;font-weight:400;color:#3a3a3a;will-change:transform;">Дополнительные настройки</div>
<div class="t" style="left:889.70px;top:166.00px;font-size:13.82px;line-height:13.82px;font-weight:400;color:#3a3a3a;will-change:transform;">Начисления</div>
<div class="t" style="left:1018.00px;top:165.00px;font-size:14.1px;line-height:14.1px;font-weight:400;color:#3a3a3a;will-change:transform;">Итоги</div>
<div class="card" style="left:395px;top:206px;width:671px;height:180px"></div>
<div class="t" style="left:415.70px;top:231.00px;font-size:13.35px;line-height:13.35px;font-weight:700;color:#161616;will-change:transform;">Наименование стройки</div>
<div class="t" style="left:635.70px;top:230.00px;font-size:14.49px;line-height:14.49px;font-weight:400;color:#1c1c1c;will-change:transform;">ЖК Майский</div>
<div class="r" style="left:635px;top:249px;width:411px;height:1px;background:#8a8a8a;"></div>
<div class="t" style="left:415.70px;top:270.00px;font-size:13.28px;line-height:13.28px;font-weight:700;color:#161616;will-change:transform;">Адрес стройки</div>
<div class="t" style="left:635.70px;top:269.00px;font-size:14.34px;line-height:14.34px;font-weight:400;color:#1c1c1c;will-change:transform;">г. Москва, ул. Правды</div>
<div class="r" style="left:635px;top:288px;width:411px;height:1px;background:#8a8a8a;"></div>
<div class="t" style="left:415.70px;top:310.00px;font-size:12.97px;line-height:12.97px;font-weight:700;color:#161616;will-change:transform;">Основание</div>
<div class="t" style="left:635.70px;top:308.00px;font-size:14.06px;line-height:14.06px;font-weight:400;color:#1c1c1c;will-change:transform;">Чертежи №12521</div>
<div class="r" style="left:635px;top:328px;width:411px;height:1px;background:#8a8a8a;"></div>
<div class="t" style="left:415.70px;top:348.00px;font-size:13.22px;line-height:13.22px;font-weight:700;color:#161616;will-change:transform;">Стадия</div>
<div class="t" style="left:635.70px;top:347.00px;font-size:14.56px;line-height:14.56px;font-weight:400;color:#1c1c1c;will-change:transform;">РД</div>
<div class="r" style="left:635px;top:366px;width:411px;height:1px;background:#8a8a8a;"></div>
<svg class="r" style="left:1031px;top:232px;" width="15" height="15" viewBox="0 0 15 15"><g transform="translate(7.2 6.9) rotate(-45) scale(0.68) translate(-12 -12)" fill="#4b27a6"><path d="M3.9 12c0-1.71 1.39-3.1 3.1-3.1h4V7H7c-2.76 0-5 2.24-5 5s2.24 5 5 5h4v-1.9H7c-1.71 0-3.1-1.39-3.1-3.1zM8 13h8v-2H8v2zm9-6h-4v1.9h4c1.71 0 3.1 1.39 3.1 3.1s-1.39 3.1-3.1 3.1h-4V17h4c2.76 0 5-2.24 5-5s-2.24-5-5-5z"/></g></svg>
<svg class="r" style="left:1031px;top:271px;" width="15" height="15" viewBox="0 0 15 15"><g transform="translate(7.2 6.9) rotate(-45) scale(0.68) translate(-12 -12)" fill="#4b27a6"><path d="M3.9 12c0-1.71 1.39-3.1 3.1-3.1h4V7H7c-2.76 0-5 2.24-5 5s2.24 5 5 5h4v-1.9H7c-1.71 0-3.1-1.39-3.1-3.1zM8 13h8v-2H8v2zm9-6h-4v1.9h4c1.71 0 3.1 1.39 3.1 3.1s-1.39 3.1-3.1 3.1h-4V17h4c2.76 0 5-2.24 5-5s-2.24-5-5-5z"/></g></svg>
<svg class="r" style="left:1026px;top:352px;" width="11" height="6" viewBox="0 0 11 6"><path d="M0.2 0.2 H10.2 L5.2 5.4 Z" fill="#4a4a4a"/></svg>
<div class="card" style="left:395px;top:394px;width:671px;height:311px"></div>
<div class="t" style="left:415.70px;top:417.00px;font-size:14.91px;line-height:14.91px;font-weight:700;color:#161616;will-change:transform;">Вид работ</div>
<svg class="r" style="left:414px;top:446px;" width="18" height="18" viewBox="0 0 18 18"><circle cx="9" cy="9" r="7" fill="none" stroke="#4b27a6" stroke-width="2"/><circle cx="9" cy="9" r="3.9" fill="#4b27a6"/></svg>
<div class="t" style="left:449.70px;top:450.00px;font-size:11.22px;line-height:11.22px;font-weight:700;color:#161616;will-change:transform;">Строительство</div>
<div class="r" style="left:408px;top:482px;width:638px;height:1px;background:#dcdcdc;"></div>
<svg class="r" style="left:414px;top:489px;" width="18" height="18" viewBox="0 0 18 18"><circle cx="9" cy="9" r="7" fill="none" stroke="#6a6a6a" stroke-width="2"/></svg>
<div class="t" style="left:449.50px;top:493.00px;font-size:11.45px;line-height:11.45px;font-weight:700;color:#161616;will-change:transform;">Капитальный ремонт объектов непроизводственного назначения</div>
<div class="r" style="left:415px;top:520px;width:16px;height:16px;background:#fff;border:2px solid #cfcfcf;border-radius:2px;"></div>
<div class="t" style="left:449.50px;top:518.00px;font-size:12.06px;line-height:12.06px;font-weight:400;color:#2a2a2a;will-change:transform;">Применение коэф. к НР и СП для сборников ТСН-2001.4 при капитальном ремонте объектов</div>
<div class="t" style="left:449.50px;top:530.00px;font-size:12.21px;line-height:12.21px;font-weight:400;color:#2a2a2a;will-change:transform;">находящихся в эксплуатации</div>
<svg class="r" style="left:1020px;top:520px;" width="20" height="20" viewBox="0 0 20 20"><circle cx="10" cy="10" r="8.35" fill="none" stroke="#4b27a6" stroke-width="1.3"/><text x="10" y="14.86" text-anchor="middle" font-family="Liberation Sans" font-size="13.5" fill="#4b27a6">?</text></svg>
<div class="r" style="left:408px;top:557px;width:638px;height:1px;background:#dcdcdc;"></div>
<svg class="r" style="left:414px;top:564px;" width="18" height="18" viewBox="0 0 18 18"><circle cx="9" cy="9" r="7" fill="none" stroke="#6a6a6a" stroke-width="2"/></svg>
<div class="t" style="left:449.50px;top:567.00px;font-size:11.51px;line-height:11.51px;font-weight:700;color:#161616;will-change:transform;">Кап.ремонт объектов производственного назначения, сетей инженерно-технического обеспечения,</div>
<div class="t" style="left:449.50px;top:579.00px;font-size:11.56px;line-height:11.56px;font-weight:700;color:#161616;will-change:transform;">кап.ремонт дорог и инженерных сооружений (в т.ч. гидротехнических сооружений, мостов,</div>
<div class="t" style="left:449.50px;top:591.00px;font-size:11.28px;line-height:11.28px;font-weight:700;color:#161616;will-change:transform;">путепроводов и тому подобное)</div>
<div class="r" style="left:408px;top:618px;width:638px;height:1px;background:#dcdcdc;"></div>
<svg class="r" style="left:414px;top:625px;" width="18" height="18" viewBox="0 0 18 18"><circle cx="9" cy="9" r="7" fill="none" stroke="#6a6a6a" stroke-width="2"/></svg>
<div class="t" style="left:449.50px;top:628.00px;font-size:11.61px;line-height:11.61px;font-weight:700;color:#161616;will-change:transform;">Реконструкция</div>
<div class="r" style="left:415px;top:656px;width:16px;height:16px;background:#fff;border:2px solid #cfcfcf;border-radius:2px;"></div>
<div class="t" style="left:449.50px;top:653.00px;font-size:12.21px;line-height:12.21px;font-weight:400;color:#2a2a2a;will-change:transform;">Строительство в рамках одного титула новых зданий, сооружений, новых участков наружных</div>
<div class="t" style="left:449.50px;top:665.00px;font-size:12.16px;line-height:12.16px;font-weight:400;color:#2a2a2a;will-change:transform;">инженерных сетей по новой или старой трассе</div>
<svg class="r" style="left:1020px;top:656px;" width="20" height="20" viewBox="0 0 20 20"><circle cx="10" cy="9.600000000000023" r="8.35" fill="none" stroke="#4b27a6" stroke-width="1.3"/><text x="10" y="14.460000000000022" text-anchor="middle" font-family="Liberation Sans" font-size="13.5" fill="#4b27a6">?</text></svg>
<div class="card" style="left:395px;top:713px;width:671px;height:92px"></div>
<div class="t" style="left:415.70px;top:735.00px;font-size:15.18px;line-height:15.18px;font-weight:700;color:#161616;will-change:transform;">Справочник поправок</div>
<div class="t" style="left:415.70px;top:763.00px;font-size:13.19px;line-height:13.19px;font-weight:700;color:#161616;will-change:transform;">Сборник</div>
<div class="t" style="left:636.00px;top:762.00px;font-size:14.07px;line-height:14.07px;font-weight:400;color:#1c1c1c;will-change:transform;">Поправки для ТСН-2001 от 28.11.2025 г. доп 80</div>
<div class="card" style="left:395px;top:813px;width:671px;height:200px"></div>
<div class="t" style="left:415.70px;top:840.00px;font-size:12.97px;line-height:12.97px;font-weight:700;color:#9c9c9c;will-change:transform;">Основание</div>
<div class="t" style="left:636.00px;top:838.00px;font-size:14.03px;line-height:14.03px;font-weight:400;color:#a6a6a6;will-change:transform;">Приказ № МКЭ-ОД/25-132 от 22.12.2025</div>
<div class="r" style="left:635px;top:857px;width:411px;height:1px;background:#8a8a8a;"></div>
<div class="r" style="left:415px;top:899px;width:190px;height:60px;background:#eeebfb;"></div>
<div class="r" style="left:415px;top:872px;width:631px;height:1px;background:#cdbfea;"></div>
<div class="r" style="left:415px;top:899px;width:631px;height:1px;background:#cdbfea;"></div>
<div class="r" style="left:415px;top:920px;width:631px;height:1px;background:#cdbfea;"></div>
<div class="r" style="left:415px;top:941px;width:631px;height:1px;background:#cdbfea;"></div>
<div class="r" style="left:415px;top:872px;width:1px;height:87px;background:#cdbfea;"></div>
<div class="r" style="left:604px;top:872px;width:1px;height:87px;background:#cdbfea;"></div>
<div class="r" style="left:825px;top:872px;width:1px;height:87px;background:#cdbfea;"></div>
<div class="r" style="left:1045px;top:872px;width:1px;height:87px;background:#cdbfea;"></div>
<div class="t" style="left:414.80px;width:600px;text-align:center;top:879.00px;font-size:13.6px;line-height:13.6px;font-weight:400;color:#222;will-change:transform;">Материалы</div>
<div class="t" style="left:635.30px;width:600px;text-align:center;top:879.00px;font-size:13.6px;line-height:13.6px;font-weight:400;color:#222;will-change:transform;">Оборудование</div>
<div class="t" style="right:1164.70px;top:903.00px;font-size:13px;line-height:13px;font-weight:700;color:#9a9a9a;will-change:transform;">Инфляторы</div>
<div class="t" style="left:414.80px;width:600px;text-align:center;top:904.00px;font-size:12.6px;line-height:12.6px;font-weight:400;color:#9a9a9a;will-change:transform;">9,84</div>
<div class="t" style="left:635.30px;width:600px;text-align:center;top:904.00px;font-size:12.6px;line-height:12.6px;font-weight:400;color:#9a9a9a;will-change:transform;">7,57</div>
<div class="t" style="right:1164.70px;top:924.00px;font-size:13px;line-height:13px;font-weight:700;color:#9a9a9a;will-change:transform;">Дефляторы</div>
<div class="t" style="left:414.80px;width:600px;text-align:center;top:925.00px;font-size:12.6px;line-height:12.6px;font-weight:400;color:#9a9a9a;will-change:transform;">9,84</div>
<div class="t" style="left:635.30px;width:600px;text-align:center;top:925.00px;font-size:12.6px;line-height:12.6px;font-weight:400;color:#9a9a9a;will-change:transform;">7,57</div>
<div class="t" style="right:1164.70px;top:945.00px;font-size:13px;line-height:13px;font-weight:700;color:#1f1f1f;will-change:transform;">Транспортные, %</div>
<div class="t" style="left:414.80px;width:600px;text-align:center;top:946.00px;font-size:12.6px;line-height:12.6px;font-weight:400;color:#222;will-change:transform;">0,00</div>
<div class="t" style="left:635.30px;width:600px;text-align:center;top:946.00px;font-size:12.6px;line-height:12.6px;font-weight:400;color:#222;will-change:transform;">0,00</div>
<div class="card" style="left:1076px;top:206px;width:671px;height:144px"></div>
<div class="t" style="left:1096.50px;top:230.00px;font-size:13.37px;line-height:13.37px;font-weight:700;color:#9c9c9c;will-change:transform;">Нормативная база</div>
<div class="t" style="left:1316.50px;top:230.00px;font-size:14.18px;line-height:14.18px;font-weight:400;color:#aaaaaa;will-change:transform;">Территориальные сметные нормативы для Москвы ТС...</div>
<div class="r" style="left:1316px;top:248px;width:411px;height:1px;background:#cccccc;"></div>
<svg class="r" style="left:1707px;top:234px;" width="11" height="6" viewBox="0 0 11 6"><path d="M0.2 0.2 H10.2 L5.2 5.4 Z" fill="#b5b5b5"/></svg>
<div class="t" style="left:1096.50px;top:274.00px;font-size:13.14px;line-height:13.14px;font-weight:700;color:#161616;will-change:transform;">Дополнение</div>
<svg class="r" style="left:1180px;top:271px;" width="20" height="20" viewBox="0 0 20 20"><circle cx="10" cy="10" r="8.35" fill="none" stroke="#4b27a6" stroke-width="1.3"/><text x="10" y="14.86" text-anchor="middle" font-family="Liberation Sans" font-size="13.5" fill="#4b27a6">?</text></svg>
<div class="t" style="left:1316.50px;top:273.00px;font-size:14.1px;line-height:14.1px;font-weight:400;color:#1c1c1c;will-change:transform;">Дополнение 80 от 15.12.2025</div>
<div class="r" style="left:1316px;top:292px;width:411px;height:1px;background:#8a8a8a;"></div>
<svg class="r" style="left:1707px;top:277px;" width="11" height="6" viewBox="0 0 11 6"><path d="M0.2 0.2 H10.2 L5.2 5.4 Z" fill="#4a4a4a"/></svg>
<div class="r" style="left:1096px;top:310px;width:16px;height:16px;background:#fff;border:2px solid #4b27a6;border-radius:1px;"></div>
<div class="t" style="left:1120.80px;top:311.00px;font-size:14.23px;line-height:14.23px;font-weight:400;color:#2a2a2a;will-change:transform;">Применить зимнее удорожание</div>
<div class="card" style="left:1076px;top:359px;width:671px;height:130px"></div>
<div class="t" style="left:1096.50px;top:381.00px;font-size:15.29px;line-height:15.29px;font-weight:700;color:#161616;will-change:transform;">Коэффициенты (индексы) пересчета</div>
<div class="t" style="left:1096.50px;top:414.00px;font-size:12.75px;line-height:12.75px;font-weight:700;color:#161616;will-change:transform;">Год</div>
<div class="t" style="left:1316.50px;top:413.00px;font-size:13.75px;line-height:13.75px;font-weight:400;color:#1c1c1c;will-change:transform;">2026</div>
<div class="r" style="left:1316px;top:431px;width:411px;height:1px;background:#8a8a8a;"></div>
<svg class="r" style="left:1707px;top:416px;" width="11" height="6" viewBox="0 0 11 6"><path d="M0.2 0.2 H10.2 L5.2 5.4 Z" fill="#4a4a4a"/></svg>
<div class="t" style="left:1096.50px;top:450.00px;font-size:13.3px;line-height:13.3px;font-weight:700;color:#161616;will-change:transform;">Период выпуска</div>
<div class="t" style="left:1316.50px;top:448.00px;font-size:14.39px;line-height:14.39px;font-weight:400;color:#1c1c1c;will-change:transform;">I квартал (выпуск 219)</div>
<div class="r" style="left:1316px;top:468px;width:411px;height:1px;background:#8a8a8a;"></div>
<svg class="r" style="left:1707px;top:453px;" width="11" height="6" viewBox="0 0 11 6"><path d="M0.2 0.2 H10.2 L5.2 5.4 Z" fill="#4a4a4a"/></svg>
<div class="card" style="left:1076px;top:497px;width:671px;height:167px"></div>
<div class="t" style="left:1096.50px;top:518.00px;font-size:16.14px;line-height:16.14px;font-weight:700;color:#161616;will-change:transform;">ТСН-2001.13</div>
<div class="t" style="left:1096.50px;top:552.00px;font-size:13.4px;line-height:13.4px;font-weight:700;color:#161616;will-change:transform;">Нормативная база</div>
<svg class="r" style="left:1223px;top:547px;" width="20" height="20" viewBox="0 0 20 20"><circle cx="10" cy="10" r="8.35" fill="none" stroke="#4b27a6" stroke-width="1.3"/><text x="10" y="14.86" text-anchor="middle" font-family="Liberation Sans" font-size="13.5" fill="#4b27a6">?</text></svg>
<div class="t" style="left:1316.50px;top:552.00px;font-size:13.94px;line-height:13.94px;font-weight:400;color:#1c1c1c;will-change:transform;">ТСН МГЭ глава 13. Доп. 46 от 25.12.2025</div>
<div class="r" style="left:1316px;top:569px;width:411px;height:1px;background:#8a8a8a;"></div>
<svg class="r" style="left:1707px;top:554px;" width="11" height="6" viewBox="0 0 11 6"><path d="M0.2 0.2 H10.2 L5.2 5.4 Z" fill="#4a4a4a"/></svg>
<div class="t" style="left:1096.50px;top:590.00px;font-size:12.75px;line-height:12.75px;font-weight:700;color:#161616;will-change:transform;">Год</div>
<div class="t" style="left:1316.50px;top:589.00px;font-size:13.75px;line-height:13.75px;font-weight:400;color:#1c1c1c;will-change:transform;">2026</div>
<div class="r" style="left:1316px;top:606px;width:411px;height:1px;background:#8a8a8a;"></div>
<svg class="r" style="left:1707px;top:592px;" width="11" height="6" viewBox="0 0 11 6"><path d="M0.2 0.2 H10.2 L5.2 5.4 Z" fill="#4a4a4a"/></svg>
<div class="t" style="left:1096.50px;top:626.00px;font-size:13.3px;line-height:13.3px;font-weight:700;color:#161616;will-change:transform;">Период выпуска</div>
<div class="t" style="left:1316.50px;top:626.00px;font-size:14.39px;line-height:14.39px;font-weight:400;color:#1c1c1c;will-change:transform;">I квартал (выпуск 64)</div>
<div class="r" style="left:1316px;top:644px;width:411px;height:1px;background:#8a8a8a;"></div>
<svg class="r" style="left:1707px;top:629px;" width="11" height="6" viewBox="0 0 11 6"><path d="M0.2 0.2 H10.2 L5.2 5.4 Z" fill="#4a4a4a"/></svg>
<div class="card" style="left:1076px;top:673px;width:671px;height:269px"></div>
<div class="t" style="left:1096.50px;top:695.00px;font-size:15.37px;line-height:15.37px;font-weight:700;color:#161616;will-change:transform;">Применение НР и СП для сборников 3.27, 3.29 и 4.10</div>
<svg class="r" style="left:1095px;top:725.8px;" width="18" height="18" viewBox="0 0 18 18"><circle cx="9" cy="9" r="7" fill="none" stroke="#4b27a6" stroke-width="2"/><circle cx="9" cy="9" r="3.9" fill="#4b27a6"/></svg>
<div class="t" style="left:1130.60px;top:729.00px;font-size:12.24px;line-height:12.24px;font-weight:400;color:#333;will-change:transform;">Автомобильные дороги</div>
<svg class="r" style="left:1274px;top:726px;" width="16.5" height="16.5" viewBox="0 0 16.5 16.5"><circle cx="8" cy="7.7999999999999545" r="6.65" fill="none" stroke="#4b27a6" stroke-width="1.2"/><text x="8" y="11.714999999999954" text-anchor="middle" font-family="Liberation Sans" font-size="10.875" fill="#4b27a6">?</text></svg>
<svg class="r" style="left:1095px;top:751px;" width="18" height="18" viewBox="0 0 18 18"><circle cx="9" cy="9" r="7" fill="none" stroke="#6a6a6a" stroke-width="2"/></svg>
<div class="t" style="left:1130.60px;top:753.00px;font-size:12.27px;line-height:12.27px;font-weight:400;color:#333;will-change:transform;">Устройство покрытий дорожек, тротуаров, мостовых и площадок и прочее</div>
<div class="r" style="left:1096px;top:777px;width:631px;height:1px;background:#dddddd;"></div>
<div class="t" style="left:1096.50px;top:785.00px;font-size:11.33px;line-height:11.33px;font-weight:700;color:#161616;will-change:transform;">Тоннели и метрополитены:</div>
<svg class="r" style="left:1095px;top:800.8px;" width="18" height="18" viewBox="0 0 18 18"><circle cx="9" cy="9" r="7" fill="none" stroke="#4b27a6" stroke-width="2"/><circle cx="9" cy="9" r="3.9" fill="#4b27a6"/></svg>
<div class="t" style="left:1130.60px;top:804.00px;font-size:12.22px;line-height:12.22px;font-weight:400;color:#333;will-change:transform;">Закрытый способ работ</div>
<svg class="r" style="left:1276px;top:801px;" width="16.5" height="16.5" viewBox="0 0 16.5 16.5"><circle cx="8" cy="8" r="6.65" fill="none" stroke="#4b27a6" stroke-width="1.2"/><text x="8" y="11.915" text-anchor="middle" font-family="Liberation Sans" font-size="10.875" fill="#4b27a6">?</text></svg>
<svg class="r" style="left:1095px;top:826px;" width="18" height="18" viewBox="0 0 18 18"><circle cx="9" cy="9" r="7" fill="none" stroke="#6a6a6a" stroke-width="2"/></svg>
<div class="t" style="left:1130.60px;top:828.00px;font-size:12.15px;line-height:12.15px;font-weight:400;color:#333;will-change:transform;">Открытый способ работ</div>
<div class="r" style="left:1096px;top:852px;width:631px;height:1px;background:#dddddd;"></div>
<div class="t" style="left:1096.50px;top:860.00px;font-size:11.27px;line-height:11.27px;font-weight:700;color:#161616;will-change:transform;">Оборудование связи:</div>
<svg class="r" style="left:1095px;top:875.5px;" width="18" height="18" viewBox="0 0 18 18"><circle cx="9" cy="9" r="7" fill="none" stroke="#4b27a6" stroke-width="2"/><circle cx="9" cy="9" r="3.9" fill="#4b27a6"/></svg>
<div class="t" style="left:1130.60px;top:878.00px;font-size:12.31px;line-height:12.31px;font-weight:400;color:#333;will-change:transform;">Прокладка и монтаж сетей связи</div>
<svg class="r" style="left:1328px;top:876px;" width="16.5" height="16.5" viewBox="0 0 16.5 16.5"><circle cx="8" cy="8" r="6.65" fill="none" stroke="#4b27a6" stroke-width="1.2"/><text x="8" y="11.915" text-anchor="middle" font-family="Liberation Sans" font-size="10.875" fill="#4b27a6">?</text></svg>
<svg class="r" style="left:1095px;top:900.5px;" width="18" height="18" viewBox="0 0 18 18"><circle cx="9" cy="9" r="7" fill="none" stroke="#6a6a6a" stroke-width="2"/></svg>
<div class="t" style="left:1130.60px;top:903.00px;font-size:12.37px;line-height:12.37px;font-weight:400;color:#333;will-change:transform;">Прокладка и монтаж междугородных линий связи</div>
<div class="r" style="left:380px;top:959px;width:1382px;height:75px;background:#fff;"></div>
<div class="r" style="left:380px;top:959px;width:1382px;height:1px;background:#cdbfea;"></div>
<div class="t" style="left:390.70px;top:977.00px;font-size:12.95px;line-height:12.95px;font-weight:700;color:#161616;">Всего</div>
<div class="t" style="left:448.30px;top:976.00px;font-size:13.66px;line-height:13.66px;font-weight:400;color:#1c1c1c;">Б: 26,49 тыс. р.</div>
<div class="t" style="left:566.60px;top:976.00px;font-size:13.74px;line-height:13.74px;font-weight:400;color:#1c1c1c;">Т: 336,37 тыс. р.</div>
<div class="r" style="left:1139px;top:970px;width:398px;height:54px;background:#fff;border:2px solid #bdbdbd;border-radius:4px;"></div>
<svg class="r" style="left:1156px;top:983px;" width="23" height="28" viewBox="0 0 23 28"><rect x="1" y="1" width="21" height="26" rx="3" fill="#eeeeee" stroke="#b3b3b3" stroke-width="1.3"/>
<rect x="3" y="3.2" width="17" height="4.6" rx="1.5" fill="#fff" stroke="#b3b3b3" stroke-width="1.1"/>
<g fill="#b3b3b3"><rect x="3" y="10" width="3" height="1.8"/><rect x="7.4" y="10" width="3" height="1.8"/><rect x="11.8" y="10" width="3" height="1.8"/><rect x="16.2" y="10" width="3" height="1.8"/>
<rect x="3" y="13" width="3" height="1.8"/><rect x="7.4" y="13" width="3" height="1.8"/><rect x="11.8" y="13" width="3" height="1.8"/><rect x="16.2" y="13" width="3" height="1.8"/>
<rect x="3" y="16" width="3" height="1.8"/><rect x="7.4" y="16" width="3" height="1.8"/><rect x="11.8" y="16" width="3" height="1.8"/><rect x="16.2" y="16" width="3" height="1.8"/>
<rect x="3" y="19" width="3" height="1.8"/><rect x="7.4" y="19" width="3" height="1.8"/><rect x="11.8" y="19" width="3" height="1.8"/><rect x="16.2" y="19" width="3" height="1.8"/>
<rect x="11.8" y="22.3" width="7.4" height="1.6"/></g></svg>
<div class="t" style="left:1194.80px;top:987.00px;font-size:21.54px;line-height:21.54px;font-weight:400;color:#bdbdbd;">Применить параметры к сметам</div>
<div class="r" style="left:1549px;top:970px;width:203px;height:54px;background:#512da8;border-radius:4px;"></div>
<svg class="r" style="left:1565px;top:984px;" width="29" height="28" viewBox="0 0 29 28"><g fill="#fff"><rect x="1.6" y="7" width="10.4" height="19.6"/><rect x="13" y="1" width="14" height="25.6"/></g><g fill="#512da8"><rect x="3.4" y="9.5" width="2.6" height="2.5"/><rect x="3.4" y="14" width="2.6" height="2.5"/><rect x="3.4" y="18.4" width="2.6" height="2.5"/><rect x="7.7" y="9.5" width="2.6" height="2.5"/><rect x="7.7" y="14" width="2.6" height="2.5"/><rect x="7.7" y="18.4" width="2.6" height="2.5"/><rect x="4" y="23.4" width="5" height="1.9"/><rect x="14.5" y="3.8" width="2.5" height="2.5"/><rect x="14.5" y="8.2" width="2.5" height="2.5"/><rect x="14.5" y="12.6" width="2.5" height="2.5"/><rect x="14.5" y="16.6" width="2.5" height="2.5"/><rect x="18.7" y="3.8" width="2.5" height="2.5"/><rect x="18.7" y="8.2" width="2.5" height="2.5"/><rect x="18.7" y="12.6" width="2.5" height="2.5"/><rect x="18.7" y="16.6" width="2.5" height="2.5"/><rect x="23.1" y="3.8" width="2.5" height="2.5"/><rect x="23.1" y="8.2" width="2.5" height="2.5"/><rect x="23.1" y="12.6" width="2.5" height="2.5"/><rect x="23.1" y="16.6" width="2.5" height="2.5"/><rect x="18" y="22.1" width="4.5" height="2.5"/></g></svg>
<div class="t" style="left:1605.40px;top:987.00px;font-size:20.64px;line-height:20.64px;font-weight:400;color:#ffffff;">Открыть ССР</div>
<div class="r" style="left:1467px;top:19px;width:275px;height:83px;background:rgba(255,255,255,.9);border:1px solid #5cb3e2;border-radius:3px;box-shadow:0 3px 8px rgba(0,0,0,.13)"></div>
<svg class="r" style="left:1479px;top:30px;" width="19" height="19" viewBox="0 0 19 19"><circle cx="9.5" cy="9.5" r="8.3" fill="none" stroke="#55aee0" stroke-width="1.4"/><rect x="8.7" y="7.6" width="1.6" height="6.4" fill="#55aee0"/><rect x="8.7" y="4.6" width="1.6" height="1.7" fill="#55aee0"/></svg>
<div class="t" style="left:1505.00px;top:34.00px;font-size:10.69px;line-height:10.69px;font-weight:700;color:#4e5d6a;will-change:transform;">Экспорт сметы</div>
<div class="t" style="left:1505.00px;top:59.00px;font-size:11.2px;line-height:11.2px;font-weight:400;color:#4e5d6a;will-change:transform;">Началась операция экспорта сметы</div>
<div class="t" style="left:1505.00px;top:76.00px;font-size:11.37px;line-height:11.37px;font-weight:400;color:#4e5d6a;will-change:transform;">(Новый сводный сметный расчет)</div>
<svg class="r" style="left:1717px;top:32px;" width="12" height="12" viewBox="0 0 12 12"><path d="M1 1 L11 11 M11 1 L1 11" stroke="#2e2e2e" stroke-width="1.9"/></svg>
<div class="r" style="left:1467px;top:118px;width:275px;height:66px;background:rgba(255,255,255,.9);border:1px solid #7ccb5c;border-radius:3px;box-shadow:0 3px 8px rgba(0,0,0,.13)"></div>
<svg class="r" style="left:1478px;top:132px;" width="20" height="14" viewBox="0 0 20 14"><path d="M1.5 7.5 L6.8 12.5 L18.5 1.2" fill="none" stroke="#74c454" stroke-width="1.5"/></svg>
<div class="t" style="left:1505.00px;top:133.00px;font-size:10.53px;line-height:10.53px;font-weight:700;color:#5b7052;will-change:transform;">Экспорт завершен успешно</div>
<div class="t" style="left:1505.00px;top:158.00px;font-size:11.34px;line-height:11.34px;font-weight:400;color:#5b7052;will-change:transform;">Новый сводный сметный расчет</div>
<svg class="r" style="left:1717px;top:131px;" width="12" height="12" viewBox="0 0 12 12"><path d="M1 1 L11 11 M11 1 L1 11" stroke="#2e2e2e" stroke-width="1.9"/></svg>
<div class="r" style="left:1467px;top:200px;width:275px;height:66px;background:rgba(255,255,255,.9);border:1px solid #5cb3e2;border-radius:3px;box-shadow:0 3px 8px rgba(0,0,0,.13)"></div>
<svg class="r" style="left:1479px;top:211px;" width="19" height="19" viewBox="0 0 19 19"><circle cx="9.5" cy="9.5" r="8.3" fill="none" stroke="#55aee0" stroke-width="1.4"/><rect x="8.7" y="7.6" width="1.6" height="6.4" fill="#55aee0"/><rect x="8.7" y="4.6" width="1.6" height="1.7" fill="#55aee0"/></svg>
<div class="t" style="left:1505.00px;top:215.00px;font-size:10.58px;line-height:10.58px;font-weight:700;color:#4e5d6a;will-change:transform;">Экспорт завершен</div>
<div class="t" style="left:1505.00px;top:240.00px;font-size:11.06px;line-height:11.06px;font-weight:400;color:#4e5d6a;will-change:transform;">Операция экспорта завершена</div>
<svg class="r" style="left:1717px;top:213px;" width="12" height="12" viewBox="0 0 12 12"><path d="M1 1 L11 11 M11 1 L1 11" stroke="#2e2e2e" stroke-width="1.9"/></svg>
<div class="r" style="left:1464px;top:14px;width:284px;height:257px;border:3px solid #ff0000;z-index:40"></div>
<div class="frame"></div>
</body></html>
